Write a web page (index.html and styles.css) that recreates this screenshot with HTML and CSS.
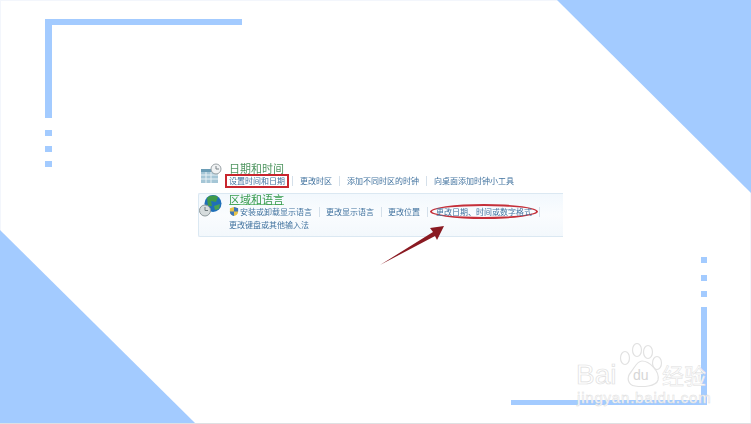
FILE: index.html
```html
<!DOCTYPE html>
<html lang="zh-CN">
<head>
<meta charset="utf-8">
<title>日期和时间</title>
<link rel="stylesheet" href="styles.css">
</head>
<body>
<main class="stage">
  <svg class="decor" width="751" height="424" viewBox="0 0 751 424" aria-hidden="true">
    <rect x="0.500" y="0.500" width="750" height="423" fill="none" stroke="#f3f6fc"/>
    <path d="M0 423.500H751" stroke="#dfe0e2"/>
    <polygon points="557,0 751,0 751,193" fill="#a3cbff"/>
    <polygon points="0,230 0,423 195,423" fill="#a3cbff"/>
    <g fill="#a3cbff">
      <path d="M45 19H242V25H52V118H45Z"/>
      <rect x="45" y="130" width="7" height="6"/>
      <rect x="45" y="146" width="7" height="6"/>
      <rect x="45" y="161" width="7" height="6"/>
      <path d="M701 307H707V405H511V400H701Z"/>
      <rect x="701" y="257" width="6" height="6"/>
      <rect x="701" y="275" width="6" height="6"/>
      <rect x="701" y="291" width="6" height="6"/>
    </g>
  </svg>

  <section class="content">
    <div class="group">
      <svg class="icon" width="24" height="24" viewBox="0 0 24 24" aria-hidden="true">
        <rect x="1" y="6" width="17" height="14" fill="#a5c6d6"/>
        <rect x="1" y="6" width="17" height="3" fill="#6b9db6"/>
        <path d="M1 12H18M1 16H18M6 9V20M11 9V20" stroke="#e8f1f5" stroke-width="1"/>
        <circle cx="16" cy="6" r="5" fill="#f0f2f3" stroke="#9aa2a6"/>
        <path d="M16 3V6H19" fill="none" stroke="#7a8388"/>
      </svg>
      <div class="body">
        <h2 class="title">日期和时间</h2>
        <div class="links">
          <a class="link boxed">设置时间和日期</a>
          <span class="sep"></span>
          <a class="link">更改时区</a>
          <span class="sep"></span>
          <a class="link">添加不同时区的时钟</a>
          <span class="sep"></span>
          <a class="link">向桌面添加时钟小工具</a>
        </div>
      </div>
    </div>

    <div class="group panel">
      <svg class="icon" width="24" height="24" viewBox="0 0 24 24" aria-hidden="true">
        <circle cx="14" cy="8.500" r="8.500" fill="#1f6fb8"/>
        <path d="M8 3C11 0 16 0 19 2L17 7L12 6L13 11L9 11Z" fill="#3f9a4a"/>
        <path d="M15 11L21 9L20 14L16 15Z" fill="#4aa353"/>
        <circle cx="6" cy="15.500" r="5.500" fill="#d6dcdd" stroke="#8f9a9d"/>
        <path d="M6 12V15.500H9" fill="none" stroke="#6f7a7d"/>
      </svg>
      <div class="body">
        <h2 class="title underlined">区域和语言</h2>
        <div class="links tight">
          <svg class="shield" width="10" height="11" viewBox="0 0 11 11" aria-hidden="true">
            <path d="M5.500 0.500L10 2V6C10 8.500 7.500 10 5.500 10.500C3.500 10 1 8.500 1 6V2Z" fill="#e6c34c"/>
            <path d="M5.500 0.500L10 2V5.500H5.500ZM5.500 5.500H1V6C1 8.500 3.500 10 5.500 10.500Z" fill="#3f76b8"/>
          </svg>
          <a class="link">安装或卸载显示语言</a>
          <span class="sep"></span>
          <a class="link">更改显示语言</a>
          <span class="sep"></span>
          <a class="link">更改位置</a>
          <span class="sep"></span>
          <a class="link circled">更改日期、时间或数字格式</a>
          <span class="sep"></span>
        </div>
        <div class="links">
          <a class="link">更改键盘或其他输入法</a>
        </div>
      </div>
    </div>
  </section>

  <svg class="arrow" width="751" height="424" viewBox="0 0 751 424" aria-hidden="true">
    <path d="M380 265L433 232L430 228L444 226L437 240L435 236Z" fill="#8a1a22"/>
  </svg>

  <div class="watermark">
    <svg class="paw" width="48" height="46" viewBox="0 0 48 46" aria-hidden="true">
      <g fill="#fff" stroke="#e2e2e2" stroke-width="1.200">
        <ellipse cx="7" cy="15" rx="4.500" ry="6.500"/>
        <ellipse cx="19" cy="7" rx="4.500" ry="6.500"/>
        <ellipse cx="30" cy="9" rx="4.500" ry="6.500"/>
        <ellipse cx="39" cy="20" rx="4.500" ry="6.500"/>
        <path d="M24 18C31 18 42 28 40 37C38 44 24 44 17 43C10 42 8 35 13 29C17 24 19 18 24 18Z"/>
      </g>
    </svg>
    <div class="brand">
      <span class="bai">Bai</span><span class="du">du</span><span class="jy">经验</span>
    </div>
    <div class="url">jingyan.baidu.com</div>
  </div>
</main>
</body>
</html>
```
FILE: styles.css
```css
* { box-sizing: border-box; }
html, body { margin: 0; padding: 0; background: #fff; }

.stage {
  position: relative;
  width: 751px;
  height: 424px;
  overflow: hidden;
  background: #fff;
  padding: 162px 0 0 198px;
  font-family: "Noto Sans CJK SC", "Liberation Sans", sans-serif;
}

.decor, .arrow { position: absolute; left: 0; top: 0; }
.arrow { filter: blur(0.4px); }

.content {
  position: relative;
  width: 365px;
  display: flex;
  flex-direction: column;
  gap: 6px;
  filter: blur(0.6px);
}

.group { display: flex; gap: 5px; padding-left: 2px; }
.icon { flex: none; margin-top: 1px; }
.body { display: flex; flex-direction: column; min-width: 0; }

.panel {
  height: 44px;
  padding-left: 0;
  padding-top: 1px;
  gap: 6px;
  background: linear-gradient(#f2f8fd, #fafcfe 50%, #f3f8fc);
  border: 1px solid #dbe8f2;
  border-right: 0;
  border-radius: 2px 0 0 2px;
}
.panel .icon { margin-top: 0; }

.title {
  margin: 0;
  font-size: 11px;
  line-height: 12px;
  font-weight: 400;
  color: #4f9560;
}
.underlined { align-self: flex-start; border-bottom: 1px solid #7cc389; line-height: 9px; color: #3a9c50; }

.links {
  display: flex;
  align-items: center;
  gap: 7px;
  height: 13px;
  white-space: nowrap;
}
.tight { gap: 6.500px; }
.link { font-size: 8px; line-height: 10px; color: #42739f; }
.sep { width: 1px; height: 10px; background: #d5e0ea; }
.shield { margin-right: -5.500px; }

.boxed {
  outline: 2px solid #c8262e;
  padding: 0 2px;
  margin: 0 -2px;
}
.circled {
  border: 2px solid #c5303a;
  border-radius: 50%;
  padding: 0 4px;
  margin: -3px -6px -3px -4px;
  height: 15px;
  line-height: 11px;
}

.watermark {
  position: absolute;
  left: 576px;
  top: 343px;
  width: 135px;
  height: 65px;
}
.paw { position: absolute; left: 42px; top: 0; }
.brand {
  position: absolute;
  left: 0;
  top: 19px;
  height: 25px;
  display: flex;
  align-items: center;
  color: #fff;
  font-family: "Liberation Sans", sans-serif;
  -webkit-text-stroke: 0.7px #dedede;
}
.bai { font-size: 28px; line-height: 25px; width: 57px; }
.du { font-size: 14px; line-height: 16px; width: 29px; color: #d6d6d6; -webkit-text-stroke: 0; }
.jy { font-family: "Noto Sans CJK SC", sans-serif; font-size: 22px; line-height: 25px; -webkit-text-stroke: 0.5px #dedede; }
.url {
  position: absolute;
  left: 1px;
  top: 46px;
  font-family: "Liberation Sans", sans-serif;
  font-size: 15px;
  line-height: 17px;
  letter-spacing: 0.8px;
  color: #fff;
  -webkit-text-stroke: 0.5px #dedede;
}
```
